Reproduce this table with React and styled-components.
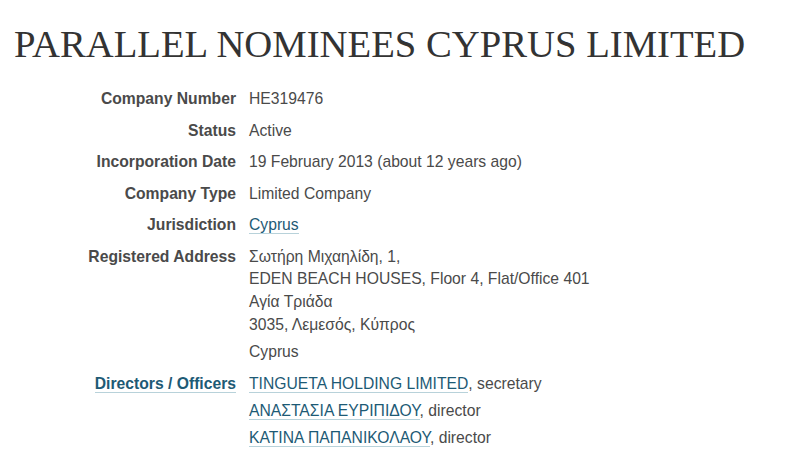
import React from "react";
import styled, { createGlobalStyle } from "styled-components";

const GlobalStyle = createGlobalStyle`
  body {
    margin: 0;
    background: #fff;
    color: #333;
    font-family: "Liberation Sans", Arial, sans-serif;
    font-size: 15.7px;
  }
`;

const Page = styled.main`
  padding: 20px 8px 0 14px;
`;

const Title = styled.h1`
  margin: 0 0 20px;
  font-family: "Liberation Serif", "Times New Roman", serif;
  font-weight: 400;
  font-size: 38.7px;
  line-height: 48px;
  color: #333;
  white-space: nowrap;
`;

const Details = styled.dl`
  display: grid;
  grid-template-columns: 222px 1fr;
  column-gap: 13px;
  margin: 0;
  line-height: 22.7px;
`;

const Label = styled.dt`
  text-align: right;
  font-weight: 700;
  color: #4a4a4a;
  margin-bottom: 8.8px;
`;

const Value = styled.dd`
  margin: 0 0 8.8px;
  color: #4a4a4a;
`;

const Link = styled.a`
  color: #1d5a75;
  text-decoration: none;
  border-bottom: 1px solid #b8d2da;
`;

const Address = styled.div``;

const Country = styled.div`
  margin-top: 4.8px;
`;

const Officers = styled.ul`
  list-style: none;
  margin: 0;
  padding: 0;
`;

const Officer = styled.li`
  margin-bottom: 4.6px;
`;

const officers = [
  { name: "TINGUETA HOLDING LIMITED", role: "secretary" },
  { name: "ΑΝΑΣΤΑΣΙΑ ΕΥΡΙΠΙΔΟΥ", role: "director" },
  { name: "ΚΑΤΙΝΑ ΠΑΠΑΝΙΚΟΛΑΟΥ", role: "director" },
];

export default function App() {
  return (
    <Page>
      <GlobalStyle />
      <Title>PARALLEL NOMINEES CYPRUS LIMITED</Title>
      <Details>
        <Label>Company Number</Label>
        <Value>HE319476</Value>
        <Label>Status</Label>
        <Value>Active</Value>
        <Label>Incorporation Date</Label>
        <Value>19 February 2013 (about 12 years ago)</Value>
        <Label>Company Type</Label>
        <Value>Limited Company</Value>
        <Label>Jurisdiction</Label>
        <Value>
          <Link href="#">Cyprus</Link>
        </Value>
        <Label>Registered Address</Label>
        <Value>
          <Address>
            Σωτήρη Μιχαηλίδη, 1,
            <br />
            EDEN BEACH HOUSES, Floor 4, Flat/Office 401
            <br />
            Αγία Τριάδα
            <br />
            3035, Λεμεσός, Κύπρος
          </Address>
          <Country>Cyprus</Country>
        </Value>
        <Label>
          <Link href="#">Directors / Officers</Link>
        </Label>
        <Value>
          <Officers>
            {officers.map(o => (
              <Officer key={o.name}>
                <Link href="#">{o.name}</Link>, {o.role}
              </Officer>
            ))}
          </Officers>
        </Value>
      </Details>
    </Page>
  );
}
